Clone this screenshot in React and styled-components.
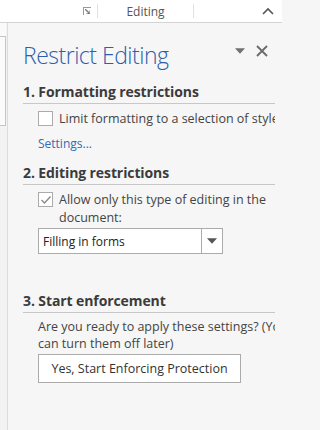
import React from "react";
import styled, { createGlobalStyle } from "styled-components";

const GlobalStyle = createGlobalStyle`
  html, body {
    margin: 0;
    padding: 0;
    background: #f6f6f6;
    font-family: "Segoe UI", "Open Sans", "Noto Sans", sans-serif;
  }
`;

const Screen = styled.div`
  width: 282px;
  height: 430px;
  display: flex;
  flex-direction: column;
  overflow: hidden;
`;

const Ribbon = styled.div`
  height: 22px;
  background: #ffffff;
  border-bottom: 1px solid #d4d4d4;
  display: flex;
  align-items: center;
  flex-shrink: 0;
`;

const RibbonGroup = styled.div`
  width: ${(p) => p.width}px;
  height: 14px;
  display: flex;
  align-items: center;
  justify-content: ${(p) => p.justify || "center"};
  border-right: ${(p) => (p.divider ? "1px solid #e1e1e1" : "none")};
  font-size: 12px;
  color: #555555;
  flex-shrink: 0;
`;

const Launcher = styled.span`
  width: 7px;
  height: 7px;
  margin-right: 6px;
  border-left: 1px solid #999;
  border-top: 1px solid #999;
  position: relative;
`;

const Body = styled.div`
  flex: 1;
  display: flex;
  min-height: 0;
`;

const DocStrip = styled.div`
  width: 7px;
  flex-shrink: 0;
  background: #f3f3f3;
  border-right: 1px solid #dcdcdc;
  display: flex;
  flex-direction: column;
`;

const RulerTop = styled.div`
  height: 13px;
  width: 6px;
  background: #fafafa;
`;

const RulerBox = styled.div`
  height: 88px;
  width: 5px;
  background: #fbfbfb;
  border-top: 1px solid #c6c6c6;
  border-right: 1px solid #c6c6c6;
  border-bottom: 1px solid #c6c6c6;
`;

const Panel = styled.div`
  flex: 1;
  background: #f6f6f6;
  padding-left: 15px;
  min-width: 0;
`;

const Content = styled.div`
  margin-right: 7px;
  overflow: hidden;
`;

const TitleRow = styled.div`
  display: flex;
  align-items: center;
  height: 40px;
  margin-top: 12px;
`;

const Title = styled.h1`
  flex: 1;
  margin: 0;
  font-family: "Segoe UI Light", "Open Sans", sans-serif;
  font-weight: 300;
  font-size: 23px;
  letter-spacing: -0.5px;
  color: #2b5fae;
  white-space: nowrap;
`;

const TitleIcons = styled.div`
  display: flex;
  align-items: center;
  gap: 11px;
  margin-right: 7px;
  margin-top: -8px;
`;

const Section = styled.section`
  margin-top: ${(p) => p.top}px;
`;

const Heading = styled.h2`
  margin: 0;
  font-size: 14px;
  font-weight: 700;
  color: #3b3b3b;
  letter-spacing: -0.1px;
  padding-bottom: 2px;
  border-bottom: 1px solid #c8c8c8;
  white-space: nowrap;
`;

const Indent = styled.div`
  padding-left: 15px;
  font-size: 12.5px;
  color: #444444;
`;

const CheckRow = styled.div`
  display: flex;
  align-items: flex-start;
  gap: 6px;
  margin-top: ${(p) => p.top || 6}px;
`;

const Box = styled.span`
  box-sizing: border-box;
  width: 15px;
  height: 15px;
  flex-shrink: 0;
  border: 1px solid #ababab;
  background: #ffffff;
  display: flex;
  align-items: center;
  justify-content: center;
  margin-top: 1px;
`;

const Label = styled.span`
  line-height: 18px;
  white-space: ${(p) => (p.nowrap ? "nowrap" : "normal")};
`;

const Link = styled.div`
  color: #2e6bb8;
  margin-top: 7px;
  font-size: 12px;
`;

const Select = styled.div`
  box-sizing: border-box;
  width: 185px;
  height: 26px;
  margin-top: 1px;
  display: flex;
  border: 1px solid #ababab;
  background: #ffffff;
  color: #222222;
`;

const SelectValue = styled.div`
  flex: 1;
  display: flex;
  align-items: center;
  padding-left: 4px;
  font-size: 12px;
`;

const SelectArrow = styled.div`
  width: 20px;
  border-left: 1px solid #ababab;
  display: flex;
  align-items: center;
  justify-content: center;
`;

const Para = styled.p`
  margin: 5px 0 0;
  line-height: 17px;
  white-space: nowrap;
`;

const Button = styled.button`
  margin-top: 2px;
  width: 203px;
  height: 29px;
  border: 1px solid #ababab;
  background: #ffffff;
  font-family: inherit;
  font-size: 12.5px;
  color: #333333;
  padding: 0;
`;

const Triangle = ({ size = 11, color = "#6a6a6a" }) => (
  <svg width={size} height={size / 2 + 1} viewBox="0 0 10 5.5">
    <path d="M0 0 L10 0 L5 5.5 Z" fill={color} />
  </svg>
);

const App = () => {
  return (
    <>
      <GlobalStyle />
      <Screen>
        <Ribbon>
          <RibbonGroup width={97} justify="flex-end" divider>
            <Launcher>
              <svg
                width="5"
                height="5"
                viewBox="0 0 5 5"
                style={{ position: "absolute", left: 1, top: 1 }}
              >
                <path d="M0 0 L5 5 M5 1.5 L5 5 L1.5 5" stroke="#777" strokeWidth="1.3" fill="none" />
              </svg>
            </Launcher>
          </RibbonGroup>
          <RibbonGroup width={95} divider>
            Editing
          </RibbonGroup>
          <RibbonGroup width={90} justify="flex-end">
            <svg width="12" height="8" viewBox="0 0 12 8" style={{ marginRight: 10 }}>
              <path d="M1 7 L6 2 L11 7" stroke="#555" strokeWidth="1.6" fill="none" />
            </svg>
          </RibbonGroup>
        </Ribbon>
        <Body>
          <DocStrip>
            <RulerTop />
            <RulerBox />
          </DocStrip>
          <Panel>
            <Content>
              <TitleRow>
                <Title>Restrict Editing</Title>
                <TitleIcons>
                  <Triangle size={10} color="#707070" />
                  <svg width="12" height="12" viewBox="0 0 12 12">
                    <path d="M1 1 L11 11 M11 1 L1 11" stroke="#6a6a6a" strokeWidth="1.8" />
                  </svg>
                </TitleIcons>
              </TitleRow>

              <Section top={7}>
                <Heading>1. Formatting restrictions</Heading>
                <Indent>
                  <CheckRow top={6}>
                    <Box />
                    <Label nowrap>Limit formatting to a selection of styles</Label>
                  </CheckRow>
                  <Link>Settings...</Link>
                </Indent>
              </Section>

              <Section top={11}>
                <Heading>2. Editing restrictions</Heading>
                <Indent>
                  <CheckRow top={6}>
                    <Box>
                      <svg width="12" height="10" viewBox="0 0 12 10">
                        <path d="M1.5 5 L4.5 8 L10.5 1.5" stroke="#8a8a8a" strokeWidth="1.4" fill="none" />
                      </svg>
                    </Box>
                    <Label>Allow only this type of editing in the document:</Label>
                  </CheckRow>
                  <Select>
                    <SelectValue>Filling in forms</SelectValue>
                    <SelectArrow>
                      <Triangle size={10} color="#555" />
                    </SelectArrow>
                  </Select>
                </Indent>
              </Section>

              <Section top={37}>
                <Heading>3. Start enforcement</Heading>
                <Indent>
                  <Para>
                    Are you ready to apply these settings? (You
                    <br />
                    can turn them off later)
                  </Para>
                  <Button>Yes, Start Enforcing Protection</Button>
                </Indent>
              </Section>
            </Content>
          </Panel>
        </Body>
      </Screen>
    </>
  );
};

export default App;
